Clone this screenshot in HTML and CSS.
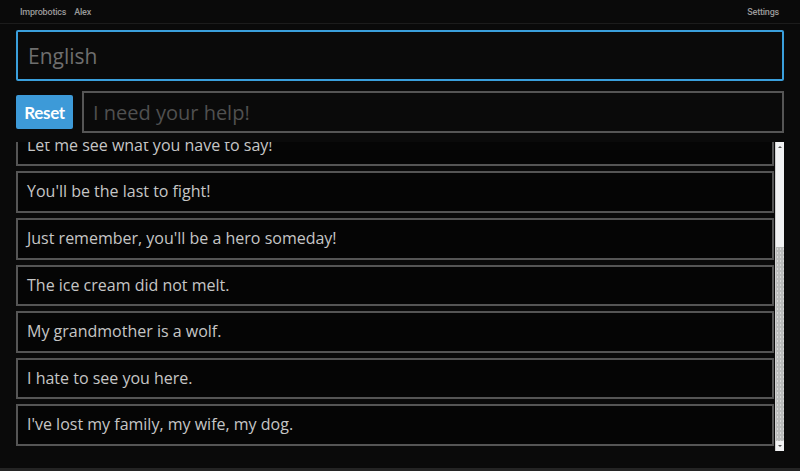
FILE: index.html
```html
<!DOCTYPE html>
<html lang="en">
  <head>
    <meta charset="UTF-8" />
    <meta name="viewport" content="width=device-width, initial-scale=1.0" />
    <title>Improbotics</title>
    <link rel="stylesheet" href="styles.css">
  </head>
  <body>
    <nav class="topbar">
      <div class="topbar-left">
        <a href="#" class="brand">Improbotics</a>
        <a href="#" class="user">Alex</a>
      </div>
      <a href="#" class="settings">Settings</a>
    </nav>

    <main class="page">
      <!-- 언어 입력 -->
      <input class="lang-input" type="text" placeholder="English" autofocus />

      <!-- 리셋 + 프롬프트 -->
      <div class="prompt-row">
        <button type="button" class="btn-reset">Reset</button>
        <input class="prompt-input" type="text" placeholder="I need your help!" />
      </div>

      <!-- 대사 목록 + 스크롤바 -->
      <div class="lines-wrap">
        <ul class="lines" id="lines">
          <li class="line">Where are you going?</li>
          <li class="line">We have to get out of here.</li>
          <li class="line">Nobody knows the answer.</li>
          <li class="line">Let me see what you have to say!</li>
          <li class="line">You'll be the last to fight!</li>
          <li class="line">Just remember, you'll be a hero someday!</li>
          <li class="line">The ice cream did not melt.</li>
          <li class="line">My grandmother is a wolf.</li>
          <li class="line">I hate to see you here.</li>
          <li class="line">I've lost my family, my wife, my dog.</li>
        </ul>
        <div class="scrollbar">
          <span class="sb-btn sb-up"></span>
          <div class="sb-track">
            <div class="sb-thumb"></div>
          </div>
          <span class="sb-btn sb-down"></span>
        </div>
      </div>
    </main>
    <div class="bottom-strip"></div>

    <script src="script.js"></script>
  </body>
</html>
```

FILE: styles.css
```css
* {
  padding: 0;
  margin: 0;
  box-sizing: border-box;
}
ul,
li {
  list-style: none;
}
a {
  text-decoration: none;
}
html,
body {
  height: 100%;
  overflow: hidden;
}
body {
  background-color: #0a0a0a;
  font-family: "Open Sans", "Noto Sans", sans-serif;
  color: #c8c8c8;
}

/* 상단 바 */
.topbar {
  height: 24px;
  border-bottom: 1px solid #1c1c1c;
  display: flex;
  align-items: center;
  justify-content: space-between;
  padding: 0 21px 0 20px;
  font-family: "Roboto", sans-serif;
  font-size: 9px;
  font-weight: 500;
  letter-spacing: -0.2px;
}
.topbar a {
  color: #9a9a9a;
}
.topbar-left {
  display: flex;
  gap: 8px;
}

.page {
  padding: 6px 16px 0;
  display: flex;
  flex-direction: column;
}

.lang-input {
  width: 100%;
  height: 51px;
  border: 2px solid #3a9fdc;
  border-radius: 2px;
  background-color: #0a0a0a;
  color: #ddd;
  font-family: "Open Sans", sans-serif;
  font-size: 21px;
  padding: 0 10px;
  outline: none;
  caret-color: #3a9fdc;
}
.lang-input::placeholder {
  color: #6e6e6e;
}

.prompt-row {
  display: flex;
  align-items: center;
  gap: 9px;
  margin-top: 10px;
}
.btn-reset {
  width: 57px;
  height: 34px;
  border: none;
  border-radius: 2px;
  background-color: #3d9ad8;
  color: #fff;
  font-family: "Lato", sans-serif;
  font-size: 17px;
  font-weight: bold;
  letter-spacing: -0.3px;
  cursor: pointer;
}
.prompt-input {
  flex: 1;
  height: 42px;
  border: 2px solid #555;
  background-color: #0a0a0a;
  color: #ddd;
  font-family: "Open Sans", sans-serif;
  font-size: 20px;
  padding: 0 9px;
  outline: none;
}
.prompt-input::placeholder {
  color: #505050;
}

/* 목록 */
.lines-wrap {
  margin-top: 9px;
  height: 309px;
  display: flex;
  gap: 1px;
}
.lines {
  flex: 1;
  overflow: hidden;
}
.line {
  margin-bottom: 5px;
  border: 2px solid #555;
  background-color: #050505;
  padding: 6px 9px;
  font-size: 16px;
  line-height: 25.6px;
  color: #c6c6c6;
}

/* 스크롤바 */
.scrollbar {
  width: 9px;
  display: flex;
  flex-direction: column;
  background-color: #f1f2f3;
  border-left: 1px solid #cfcfcf;
}
.sb-btn {
  height: 10px;
  display: flex;
  align-items: center;
  justify-content: center;
}
.sb-btn::after {
  content: "";
  border-left: 2px solid transparent;
  border-right: 2px solid transparent;
}
.sb-up::after {
  border-bottom: 2px solid #555;
}
.sb-down::after {
  border-top: 2px solid #555;
}
.sb-track {
  flex: 1;
  display: flex;
  flex-direction: column;
  justify-content: flex-end;
}
.sb-thumb {
  height: 194px;
  background-color: #bbbdbc;
  background-image: radial-gradient(#d8d8d8 0.6px, transparent 0.8px);
  background-size: 3px 4px;
}

.bottom-strip {
  position: fixed;
  left: 0;
  right: 0;
  bottom: 0;
  height: 3px;
  background-color: #242424;
}
```

FILE: script.js
```js
// 목록을 맨 아래로 스크롤
document.addEventListener("DOMContentLoaded", function () {
  const lines = document.getElementById("lines");
  lines.scrollTop = lines.scrollHeight;
});
```
